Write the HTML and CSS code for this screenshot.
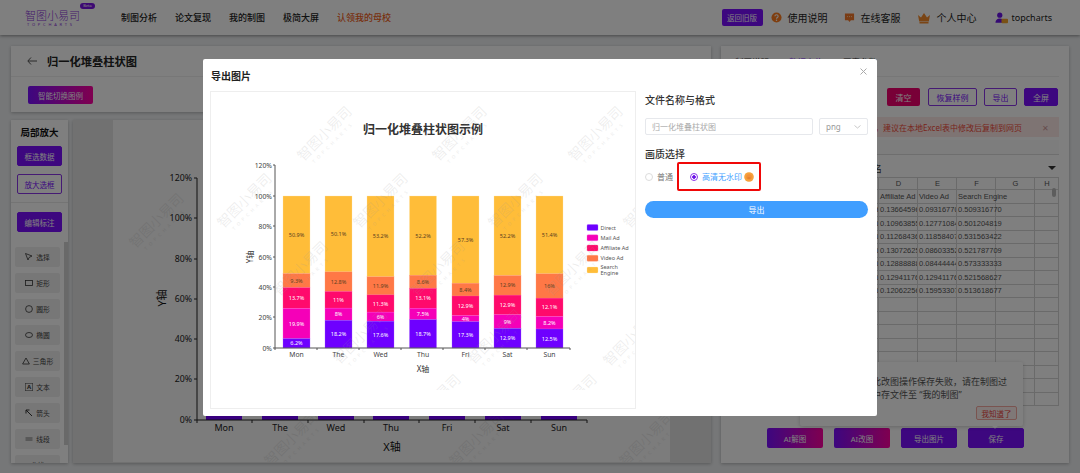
FILE: index.html
```html
<!DOCTYPE html>
<html lang="zh-CN">
<head>
  <meta charset="UTF-8">
  <title>归一化堆叠柱状图</title>
  <link rel="stylesheet" href="styles.css">
</head>
<body>
  <!-- Top bar -->
  <header class="topbar">
    <div class="logo">
      <div class="logo-name">智图小易司</div>
      <div class="logo-sub">TOPCHARTS</div>
      <span class="logo-beta">Beta</span>
    </div>
    <nav class="nav">
      <a>制图分析</a>
      <a>论文复现</a>
      <a>我的制图</a>
      <a>极简大屏</a>
      <a class="nav-hot">认领我的母校</a>
    </nav>
    <div class="top-right">
      <button class="old-btn">返回旧版</button>
      <a class="top-link">
        <svg width="11" height="11" viewBox="0 0 12 12"><circle cx="6" cy="6" r="5.5" fill="#ff7d1f"/><path d="M4.2 4.6C4.3 3.5 5 3 6 3s1.8.6 1.8 1.6C7.8 6 6 6 6 7.4" fill="none" stroke="#fff" stroke-width="1.2"/><circle cx="6" cy="9" r=".8" fill="#fff"/></svg>
        使用说明
      </a>
      <a class="top-link">
        <svg width="11" height="11" viewBox="0 0 12 12"><path d="M1 1.5h10v7.5H7.5L6 11 4.5 9H1z" fill="#f5792a"/><circle cx="3.8" cy="5" r=".6" fill="#ffd9b0"/><circle cx="6" cy="5" r=".6" fill="#ffd9b0"/><circle cx="8.2" cy="5" r=".6" fill="#ffd9b0"/></svg>
        在线客服
      </a>
      <a class="top-link">
        <svg width="14" height="12" viewBox="0 0 14 12"><path d="M1 3l3 2.500L7 1l3 4.500L13 3l-1.200 6.500H2.200z" fill="#f58a2a"/><rect x="2.500" y="10" width="9" height="1.500" fill="#f58a2a"/></svg>
        个人中心
      </a>
      <a class="top-link top-user">
        <svg width="13" height="12" viewBox="0 0 15 13"><circle cx="5.500" cy="3.200" r="3" fill="#6a12e8"/><path d="M.5 12c0-3 2-5 5-5s5 2 5 5z" fill="#6a12e8"/><rect x="7.500" y="7.500" width="7.500" height="5" rx="1" fill="#f2a32c"/></svg>
        topcharts
      </a>
    </div>
  </header>

  <main class="layout">
    <!-- Left side -->
    <section class="left-col">
      <div class="card title-card">
        <div class="title-row">
          <svg class="back" width="10" height="8" viewBox="0 0 10 8"><path d="M4 .5L.8 4 4 7.500M1 4h9" fill="none" stroke="#555" stroke-width="1"/></svg>
          <h1>归一化堆叠柱状图</h1>
        </div>
        <div class="title-tools">
          <button class="btn btn-grad switch-btn">智能切换图例</button>
        </div>
      </div>

      <div class="work">
        <aside class="tools card">
          <div class="tools-top">
            <div class="tools-title">局部放大</div>
            <button class="btn btn-solid tool-btn">框选数据</button>
            <button class="btn btn-line tool-btn">放大选框</button>
            <div class="tools-line"></div>
            <button class="btn btn-solid tool-btn">编辑标注</button>
          </div>
          <div class="shapes">
            <div class="shape">
              <svg width="8" height="8" viewBox="0 0 8 8"><path d="M.5.500L3 7l1-2.500L7 3z" fill="none" stroke="#333" stroke-width=".8"/></svg>选择
            </div>
            <div class="shape">
              <svg width="8" height="8" viewBox="0 0 8 8"><rect x=".5" y="1.500" width="7" height="5" fill="none" stroke="#333" stroke-width=".8"/></svg>矩形
            </div>
            <div class="shape">
              <svg width="8" height="8" viewBox="0 0 8 8"><circle cx="4" cy="4" r="3.400" fill="none" stroke="#333" stroke-width=".8"/></svg>圆形
            </div>
            <div class="shape">
              <svg width="8" height="8" viewBox="0 0 8 8"><ellipse cx="4" cy="4" rx="3.500" ry="2.500" fill="none" stroke="#333" stroke-width=".8"/></svg>椭圆
            </div>
            <div class="shape">
              <svg width="8" height="8" viewBox="0 0 8 8"><path d="M4 1l3.400 6H.6z" fill="none" stroke="#333" stroke-width=".8"/></svg>三角形
            </div>
            <div class="shape">
              <svg width="8" height="8" viewBox="0 0 8 8"><rect x=".3" y=".3" width="7.400" height="7.400" fill="none" stroke="#555" stroke-width=".6"/><text x="4" y="6.200" class="shape-a">A</text></svg>文本
            </div>
            <div class="shape">
              <svg width="8" height="8" viewBox="0 0 8 8"><path d="M1 1l6 6M1 1v3.500M1 1h3.500" fill="none" stroke="#333" stroke-width="1"/></svg>箭头
            </div>
            <div class="shape">
              <svg width="8" height="8" viewBox="0 0 8 8"><path d="M.5 3h7M.5 5h7" stroke="#555" stroke-width=".8"/></svg>线段
            </div>
            <div class="shape">曲线</div>
          </div>
        </aside>

        <div class="chart-card card">
          <svg class="bg-chart" width="557" height="342" viewBox="113 120 557 342">
            <defs>
              <g id="wm">
                <text class="wm-name" text-anchor="middle" x="0" y="0">智图小易司</text>
                <text class="wm-sub" text-anchor="middle" x="0" y="9">TOPCHARTS</text>
              </g>
            </defs>
            <g class="bg-bars">
              <rect x="206" y="400" width="36" height="20"/>
              <rect x="262" y="400" width="36" height="20"/>
              <rect x="318" y="400" width="36" height="20"/>
              <rect x="373" y="400" width="36" height="20"/>
              <rect x="429" y="400" width="36" height="20"/>
              <rect x="485" y="400" width="36" height="20"/>
              <rect x="541" y="400" width="36" height="20"/>
            </g>
            <path class="bg-axis" d="M194 178h3V420H587M194 218h3M194 259h3M194 299h3M194 339h3M194 379h3M194 420h3M197 420v3M252 420v3M308 420v3M364 420v3M419 420v3M475 420v3M531 420v3M587 420v3"/>
            <g class="bg-ylabels">
              <text x="192" y="181">120%</text>
              <text x="192" y="221">100%</text>
              <text x="192" y="262">80%</text>
              <text x="192" y="302">60%</text>
              <text x="192" y="342">40%</text>
              <text x="192" y="382">20%</text>
              <text x="192" y="423">0%</text>
            </g>
            <g class="bg-xlabels">
              <text x="224" y="431">Mon</text>
              <text x="280" y="431">The</text>
              <text x="336" y="431">Wed</text>
              <text x="391" y="431">Thu</text>
              <text x="447" y="431">Fri</text>
              <text x="503" y="431">Sat</text>
              <text x="559" y="431">Sun</text>
            </g>
            <text class="bg-name" x="392" y="451">X轴</text>
            <text class="bg-name" transform="translate(166 298) rotate(-90)">Y轴</text>
            <use href="#wm" transform="translate(160 224) rotate(-45)"/>
            <use href="#wm" transform="translate(295 442) rotate(-45)"/>
            <use href="#wm" transform="translate(480 442) rotate(-45)"/>
            <use href="#wm" transform="translate(650 442) rotate(-45)"/>
          </svg>
        </div>
      </div>
    </section>

    <!-- Right side -->
    <section class="right-col card">
      <div class="tabs">
        <a>制图说明</a>
        <a class="tab-on">数据上传</a>
        <a>图表参数</a>
      </div>
      <div class="data-tools">
        <button class="btn btn-red data-btn">清空</button>
        <button class="btn btn-line data-btn">恢复样例</button>
        <button class="btn btn-line data-btn">导出</button>
        <button class="btn btn-solid data-btn">全屏</button>
      </div>
      <div class="alert">
        <span>网页端数据不能保存，建议在本地Excel表中修改后复制到网页</span>
        <span class="alert-x">✕</span>
      </div>
      <div class="sheet-bar"></div>
      <div class="sheet-name">
        <span>选择工作表名</span>
        <i class="sheet-arrow"></i>
      </div>
      <div class="sheet">
        <table>
          <tr class="col-head"><th></th><th>A</th><th>B</th><th>C</th><th>D</th><th>E</th><th>F</th><th>G</th><th>H</th></tr>
          <tr><th>1</th><td></td><td>Direct</td><td>Mail Ad</td><td>Affiliate Ad</td><td>Video Ad</td><td>Search Engine</td><td></td><td></td></tr>
          <tr><th>2</th><td>Mon</td><td>0.062111801</td><td>0.198757764</td><td>0.136645963</td><td>0.093167702</td><td>0.509316770</td><td></td><td></td></tr>
          <tr><th>3</th><td>The</td><td>0.182000000</td><td>0.080000000</td><td>0.109638554</td><td>0.127710843</td><td>0.501204819</td><td></td><td></td></tr>
          <tr><th>4</th><td>Wed</td><td>0.176000000</td><td>0.060000000</td><td>0.112684366</td><td>0.118584071</td><td>0.531563422</td><td></td><td></td></tr>
          <tr><th>5</th><td>Thu</td><td>0.187000000</td><td>0.075000000</td><td>0.130726257</td><td>0.086033520</td><td>0.521787709</td><td></td><td></td></tr>
          <tr><th>6</th><td>Fri</td><td>0.173000000</td><td>0.040000000</td><td>0.128888889</td><td>0.084444444</td><td>0.573333333</td><td></td><td></td></tr>
          <tr><th>7</th><td>Sat</td><td>0.129000000</td><td>0.090000000</td><td>0.129411765</td><td>0.129411765</td><td>0.521568627</td><td></td><td></td></tr>
          <tr><th>8</th><td>Sun</td><td>0.125000000</td><td>0.082000000</td><td>0.120622568</td><td>0.159533074</td><td>0.513618677</td><td></td><td></td></tr>
          <tr><th>9</th><td></td><td></td><td></td><td></td><td></td><td></td><td></td><td></td></tr>
          <tr><th>10</th><td></td><td></td><td></td><td></td><td></td><td></td><td></td><td></td></tr>
          <tr><th>11</th><td></td><td></td><td></td><td></td><td></td><td></td><td></td><td></td></tr>
          <tr><th>12</th><td></td><td></td><td></td><td></td><td></td><td></td><td></td><td></td></tr>
          <tr><th>13</th><td></td><td></td><td></td><td></td><td></td><td></td><td></td><td></td></tr>
          <tr><th>14</th><td></td><td></td><td></td><td></td><td></td><td></td><td></td><td></td></tr>
          <tr><th>15</th><td></td><td></td><td></td><td></td><td></td><td></td><td></td><td></td></tr>
          <tr><th>16</th><td></td><td></td><td></td><td></td><td></td><td></td><td></td><td></td></tr>
        </table>
        <div class="sheet-thumb"></div>
      </div>
      <div class="actions">
        <button class="btn btn-grad act-btn">AI解图</button>
        <button class="btn btn-grad act-btn">AI改图</button>
        <button class="btn btn-solid act-btn">导出图片</button>
        <button class="btn btn-solid act-btn">保存</button>
      </div>
      <div class="notice">
        <p>若此改图操作保存失败，请在制图过<br>程中存文件至 “我的制图”</p>
        <button class="notice-btn">我知道了</button>
      </div>
    </section>
  </main>

  <div class="mask"></div>

  <!-- Export dialog -->
  <div class="dialog">
    <div class="dialog-head">
      <h2>导出图片</h2>
      <svg class="dialog-x" width="7" height="7" viewBox="0 0 7 7"><path d="M.5.500l6 6M6.500.500l-6 6" stroke="#aaa" stroke-width="1"/></svg>
    </div>
    <div class="dialog-body">
      <div class="preview">
        <svg width="424" height="316" viewBox="211 92 424 316">
          <defs>
            <clipPath id="wm-clip"><rect x="211" y="92" width="424" height="298"/></clipPath>
          </defs>
          <text class="c-title" x="423" y="134">归一化堆叠柱状图示例</text>

          <g class="c-yellow">
            <rect x="283" y="196" width="27" height="77.500"/>
            <rect x="325" y="196" width="27" height="75.900"/>
            <rect x="367" y="196" width="27" height="80.800"/>
            <rect x="409.500" y="196" width="27" height="79.200"/>
            <rect x="452" y="196" width="27" height="87.200"/>
            <rect x="494" y="196" width="27" height="79.500"/>
            <rect x="536" y="196" width="27" height="77.800"/>
          </g>
          <g class="c-orange">
            <rect x="283" y="273.500" width="27" height="14.100"/>
            <rect x="325" y="271.900" width="27" height="19.500"/>
            <rect x="367" y="276.800" width="27" height="18.100"/>
            <rect x="409.500" y="275.200" width="27" height="13.100"/>
            <rect x="452" y="283.200" width="27" height="12.800"/>
            <rect x="494" y="275.500" width="27" height="19.600"/>
            <rect x="536" y="273.800" width="27" height="24.300"/>
          </g>
          <g class="c-pink">
            <rect x="283" y="287.600" width="27" height="20.800"/>
            <rect x="325" y="291.400" width="27" height="16.700"/>
            <rect x="367" y="294.900" width="27" height="17.200"/>
            <rect x="409.500" y="288.300" width="27" height="19.900"/>
            <rect x="452" y="296" width="27" height="19.600"/>
            <rect x="494" y="295.100" width="27" height="19.600"/>
            <rect x="536" y="298.100" width="27" height="18.400"/>
          </g>
          <g class="c-magenta">
            <rect x="283" y="308.400" width="27" height="30.200"/>
            <rect x="325" y="308.100" width="27" height="12.200"/>
            <rect x="367" y="312.100" width="27" height="9.100"/>
            <rect x="409.500" y="308.200" width="27" height="11.400"/>
            <rect x="452" y="315.600" width="27" height="6.100"/>
            <rect x="494" y="314.700" width="27" height="13.700"/>
            <rect x="536" y="316.500" width="27" height="12.500"/>
          </g>
          <g class="c-purple">
            <rect x="283" y="338.600" width="27" height="9.400"/>
            <rect x="325" y="320.300" width="27" height="27.700"/>
            <rect x="367" y="321.200" width="27" height="26.800"/>
            <rect x="409.500" y="319.600" width="27" height="28.400"/>
            <rect x="452" y="321.700" width="27" height="26.300"/>
            <rect x="494" y="328.400" width="27" height="19.600"/>
            <rect x="536" y="329" width="27" height="19"/>
          </g>

          <g class="c-val c-val-dark">
            <text x="296.500" y="236.700">50.9%</text>
            <text x="338.500" y="235.900">50.1%</text>
            <text x="380.500" y="238.400">53.2%</text>
            <text x="423" y="237.600">52.2%</text>
            <text x="465.500" y="241.600">57.3%</text>
            <text x="507.500" y="237.700">52.2%</text>
            <text x="549.500" y="236.900">51.4%</text>
            <text x="296.500" y="282.500">9.3%</text>
            <text x="338.500" y="283.600">12.8%</text>
            <text x="380.500" y="287.800">11.9%</text>
            <text x="423" y="283.700">8.6%</text>
            <text x="465.500" y="291.600">8.4%</text>
            <text x="507.500" y="287.300">12.9%</text>
            <text x="549.500" y="288">16%</text>
          </g>
          <g class="c-val c-val-light">
            <text x="296.500" y="300">13.7%</text>
            <text x="338.500" y="301.700">11%</text>
            <text x="380.500" y="305.500">11.3%</text>
            <text x="423" y="300.200">13.1%</text>
            <text x="465.500" y="307.800">12.9%</text>
            <text x="507.500" y="306.900">12.9%</text>
            <text x="549.500" y="309.300">12.1%</text>
            <text x="296.500" y="325.500">19.9%</text>
            <text x="338.500" y="316.200">8%</text>
            <text x="380.500" y="318.600">6%</text>
            <text x="423" y="315.900">7.5%</text>
            <text x="465.500" y="320.600">4%</text>
            <text x="507.500" y="323.500">9%</text>
            <text x="549.500" y="324.700">8.2%</text>
            <text x="296.500" y="345.300">6.2%</text>
            <text x="338.500" y="336.100">18.2%</text>
            <text x="380.500" y="336.600">17.6%</text>
            <text x="423" y="335.800">18.7%</text>
            <text x="465.500" y="336.800">17.3%</text>
            <text x="507.500" y="340.200">12.9%</text>
            <text x="549.500" y="340.500">12.5%</text>
          </g>

          <path class="c-axis" d="M273 165h2V348H570M273 196h2M273 226h2M273 257h2M273 287h2M273 317h2M273 348h2M275 348v2M317 348v2M359 348v2M401 348v2M443 348v2M485 348v2M527 348v2M570 348v2"/>
          <g class="c-ylabels">
            <text x="272" y="167.500">120%</text>
            <text x="272" y="198.500">100%</text>
            <text x="272" y="228.500">80%</text>
            <text x="272" y="259.500">60%</text>
            <text x="272" y="289.500">40%</text>
            <text x="272" y="319.500">20%</text>
            <text x="272" y="350.500">0%</text>
          </g>
          <g class="c-xlabels">
            <text x="296.500" y="357">Mon</text>
            <text x="338.500" y="357">The</text>
            <text x="380.500" y="357">Wed</text>
            <text x="423" y="357">Thu</text>
            <text x="465.500" y="357">Fri</text>
            <text x="507.500" y="357">Sat</text>
            <text x="549.500" y="357">Sun</text>
          </g>
          <text class="c-name" x="423" y="372">X轴</text>
          <text class="c-name" transform="translate(253 257) rotate(-90)">Y轴</text>

          <rect class="c-purple" x="587" y="224.500" width="11" height="6" rx="1"/>
          <rect class="c-magenta" x="587" y="234.800" width="11" height="6" rx="1"/>
          <rect class="c-pink" x="587" y="245" width="11" height="6" rx="1"/>
          <rect class="c-orange" x="587" y="255.300" width="11" height="6" rx="1"/>
          <rect class="c-yellow" x="587" y="267" width="11" height="6" rx="1"/>
          <g class="c-legend">
            <text x="600.500" y="229.500">Direct</text>
            <text x="600.500" y="239.800">Mail Ad</text>
            <text x="600.500" y="250">Affiliate Ad</text>
            <text x="600.500" y="260.300">Video Ad</text>
            <text x="600.500" y="269">Search</text>
            <text x="600.500" y="274.500">Engine</text>
          </g>

          <g clip-path="url(#wm-clip)">
            <use href="#wm" transform="translate(328 137) rotate(-45)"/>
            <use href="#wm" transform="translate(463 137) rotate(-45)"/>
            <use href="#wm" transform="translate(599 137) rotate(-45)"/>
            <use href="#wm" transform="translate(248 204) rotate(-45)"/>
            <use href="#wm" transform="translate(384 204) rotate(-45)"/>
            <use href="#wm" transform="translate(519 204) rotate(-45)"/>
            <use href="#wm" transform="translate(654 204) rotate(-45)"/>
            <use href="#wm" transform="translate(304 272) rotate(-45)"/>
            <use href="#wm" transform="translate(441 272) rotate(-45)"/>
            <use href="#wm" transform="translate(576 272) rotate(-45)"/>
            <use href="#wm" transform="translate(364 340) rotate(-45)"/>
            <use href="#wm" transform="translate(498 340) rotate(-45)"/>
            <use href="#wm" transform="translate(634 342) rotate(-45)"/>
            <use href="#wm" transform="translate(437 405) rotate(-45)"/>
            <use href="#wm" transform="translate(573 405) rotate(-45)"/>
          </g>
        </svg>
      </div>

      <div class="options">
        <h3>文件名称与格式</h3>
        <div class="file-row">
          <div class="file-input">归一化堆叠柱状图</div>
          <div class="file-type">
            <span>png</span>
            <svg width="7" height="4" viewBox="0 0 7 4"><path d="M.5.500L3.500 3 6.500.500" fill="none" stroke="#bbb" stroke-width=".8"/></svg>
          </div>
        </div>
        <h3 class="quality-title">画质选择</h3>
        <div class="quality-row">
          <label class="radio"><i class="radio-dot"></i>普通</label>
          <label class="radio radio-on"><i class="radio-dot"></i>高清无水印</label>
          <svg class="coin" width="10" height="10" viewBox="0 0 10 10"><circle cx="5" cy="5" r="4.800" fill="#f7a13a"/><circle cx="5" cy="5" r="2.800" fill="#f0903a"/><path d="M3.500 6h3" stroke="#d8701f" stroke-width=".8"/></svg>
          <div class="red-box"></div>
        </div>
        <button class="export-btn">导出</button>
      </div>
    </div>
  </div>
</body>
</html>
```

FILE: styles.css
```css
* {
  box-sizing: border-box;
}
html, body {
  height: 473px;
  overflow: hidden;
}
body {
  margin: 0;
  background: #eceef0;
  color: #333;
  font-family: "Noto Sans", "Noto Sans CJK SC", sans-serif;
  font-size: 8px;
}
button {
  font-family: inherit;
  padding: 0;
  cursor: pointer;
}
h1, h2, h3, p {
  margin: 0;
}

/* top bar */
.topbar {
  display: flex;
  align-items: center;
  height: 35px;
  padding-left: 25px;
  background: #fff;
  box-shadow: 0 1px 3px rgba(0, 0, 0, .4);
  position: relative;
}
.logo {
  position: relative;
  width: 96px;
  margin-top: 1px;
}
.logo-name {
  color: #8a35d8;
  font-size: 11px;
  line-height: 13px;
  font-weight: 300;
}
.logo-sub {
  color: #8a35d8;
  font-size: 4px;
  line-height: 6px;
  letter-spacing: 2.800px;
  margin-left: 2px;
}
.logo-beta {
  position: absolute;
  left: 55px;
  top: -6px;
  width: 15px;
  height: 6px;
  border-radius: 3px;
  background: #7b12e6;
  color: #fff;
  font-size: 4px;
  line-height: 6px;
  text-align: center;
}
.nav {
  display: flex;
  gap: 18px;
  font-size: 9px;
  font-weight: 500;
  color: #222;
}
.nav-hot {
  color: #f0601a;
}
.top-right {
  display: flex;
  align-items: center;
  margin-left: auto;
  padding-right: 28px;
}
.old-btn {
  width: 41px;
  height: 17px;
  border: 0;
  border-radius: 2px;
  background: #7a0eff;
  color: #fff;
  font-size: 7.500px;
  margin-right: 8px;
}
.top-link {
  display: flex;
  align-items: center;
  gap: 6px;
  font-size: 10px;
  color: #222;
  margin-right: 16px;
}
.top-user {
  font-size: 9px;
  gap: 4px;
  margin: 0 0 0 2px;
}

/* page layout */
.layout {
  display: flex;
  gap: 10px;
  height: 438px;
  padding: 11px 11px 0;
}
.card {
  background: #fff;
  box-shadow: 0 1px 3px rgba(0, 0, 0, .25);
}
.left-col {
  width: 700px;
  display: flex;
  flex-direction: column;
  gap: 8px;
  height: 417px;
}
.title-card {
  height: 66px;
}
.title-row {
  display: flex;
  align-items: center;
  gap: 10px;
  height: 31px;
  padding-left: 16px;
  border-bottom: 1px solid #eee;
}
.title-row h1 {
  font-size: 11.250px;
  font-weight: 700;
  color: #222;
}
.title-tools {
  padding: 9px 17px;
}
.btn {
  border-radius: 2px;
  font-size: 7.500px;
}
.btn-solid {
  background: #7a0eff;
  border: 1px solid #7a0eff;
  color: #fff;
}
.btn-line {
  background: #fff;
  border: 1px solid #8a35e8;
  color: #7a0eff;
}
.btn-grad {
  background: linear-gradient(90deg, #7a0eff, #ff00a0);
  border: 0;
  color: #fff;
}
.btn-red {
  background: #f0006e;
  border: 0;
  color: #fff;
}
.switch-btn {
  width: 65px;
  height: 18px;
}
.work {
  display: flex;
  gap: 5px;
  height: 343px;
}

/* tool panel */
.tools {
  width: 57px;
  overflow: hidden;
}
.tools-top {
  height: 122px;
  padding: 6px 6px 0;
}
.tools-title {
  font-size: 9.500px;
  font-weight: 700;
  color: #111;
  text-align: center;
  line-height: 13px;
  margin-bottom: 7px;
}
.tool-btn {
  display: block;
  width: 45px;
  height: 20px;
  margin-bottom: 8px;
}
.tools-line {
  border-top: 1px solid #e8e8e8;
  margin: 0 -6px 9px;
}
.shapes {
  height: 203px;
  width: 57px;
  padding: 5px 0 0 4px;
  border-right: 4px solid #d2d2d2;
  display: flex;
  flex-direction: column;
  gap: 6px;
}
.shape {
  display: flex;
  align-items: center;
  justify-content: center;
  gap: 3px;
  flex: none;
  width: 45px;
  height: 20px;
  background: #efefef;
  border-radius: 2px;
  font-size: 6.800px;
  color: #444;
}
.shape-a {
  font-size: 6px;
  font-weight: 700;
  text-anchor: middle;
  fill: #333;
}

/* chart in the background */
.chart-card {
  flex: 1;
  background: #e2e2e2;
  display: flex;
  padding-left: 40px;
}
.bg-chart {
  background: #f8f8f8;
  display: block;
}
.bg-bars rect {
  fill: #7000ff;
}
.bg-axis {
  fill: none;
  stroke: #222;
  stroke-width: 1;
}
.bg-ylabels text {
  font-size: 8.800px;
  text-anchor: end;
  fill: #222;
}
.bg-xlabels text {
  font-size: 9px;
  text-anchor: middle;
  fill: #222;
}
.bg-name {
  font-size: 11px;
  text-anchor: middle;
  fill: #111;
}
.wm-name {
  font-size: 14px;
  fill: #999;
  opacity: .2;
  font-weight: 300;
}
.wm-sub {
  font-size: 4.500px;
  letter-spacing: 3.500px;
  fill: #999;
  opacity: .2;
}

/* right card */
.right-col {
  position: relative;
  flex: 1;
  height: 417px;
  padding: 0 10px;
  display: flex;
  flex-direction: column;
}
.tabs {
  display: flex;
  gap: 20px;
  height: 31px;
  padding: 10px 0 0 4px;
  font-size: 8.500px;
  line-height: 12px;
  border-bottom: 1px solid #eee;
}
.tab-on {
  color: #7a0eff;
}
.data-tools {
  display: flex;
  justify-content: flex-end;
  gap: 7px;
  margin-top: 11px;
  padding-right: 1px;
}
.data-btn {
  width: 34px;
  height: 18px;
  font-size: 8px;
}
.data-btn:nth-child(1) {
  width: 33px;
  margin-right: 1px;
}
.data-btn:nth-child(2) {
  width: 49px;
}
.data-btn:nth-child(3) {
  width: 33px;
}
.alert {
  display: flex;
  justify-content: flex-end;
  align-items: center;
  height: 20px;
  margin: 11px 0 0 -2px;
  padding-right: 10px;
  background: #fde8e6;
  color: #f04a3a;
  font-size: 8px;
  white-space: nowrap;
}
.alert-x {
  margin-left: 20px;
  font-size: 8px;
  color: #c99;
}
.sheet-bar {
  height: 15px;
  margin-top: 3px;
  background: #fafafa;
  border-bottom: 1px solid #ddd;
}
.sheet-name {
  display: flex;
  align-items: center;
  justify-content: space-between;
  height: 22px;
  padding: 4px 3px 0 97px;
  font-size: 9px;
  color: #333;
}
.sheet-arrow {
  width: 0;
  height: 0;
  border-left: 4px solid transparent;
  border-right: 4px solid transparent;
  border-top: 4px solid #333;
}
.sheet {
  position: relative;
  height: 235px;
  overflow: hidden;
}
.sheet table {
  width: 327px;
  border-collapse: collapse;
  table-layout: fixed;
  font-family: "Liberation Sans", sans-serif;
  font-size: 7.500px;
  color: #555;
}
.sheet tr {
  height: 13.500px;
}
.sheet th, .sheet td {
  padding: 0 0 0 1px;
  border: 1px solid #d4d4d4;
  white-space: nowrap;
  overflow: hidden;
  font-weight: 400;
  text-align: left;
}
/* the last filled column runs over the empty one beside it */
.sheet td:nth-child(7) {
  overflow: visible;
}
.sheet th:first-child {
  width: 30px;
}
.sheet .col-head {
  height: 12px;
}
.col-head th {
  width: 39px;
  text-align: center;
}
.col-head th:last-child {
  width: 24px;
}
.sheet-thumb {
  position: absolute;
  left: 321px;
  top: 11px;
  width: 4px;
  height: 9px;
  border-radius: 2px;
  background: #bbb;
}
.actions {
  display: flex;
  justify-content: flex-end;
  gap: 11px;
  margin-top: 16px;
  padding-right: 35px;
}
.act-btn {
  width: 56px;
  height: 20px;
  font-size: 7.500px;
}
.notice {
  position: absolute;
  left: 79px;
  top: 316px;
  width: 223px;
  height: 64px;
  padding: 13px 0 0 63px;
  background: #fff;
  border-radius: 2px;
  box-shadow: 0 1px 4px rgba(0, 0, 0, .2);
  font-size: 9px;
  line-height: 13px;
  color: #555;
}
.notice::after {
  content: "";
  position: absolute;
  left: 193px;
  bottom: -2px;
  width: 4px;
  height: 4px;
  background: #fff;
  transform: rotate(45deg);
}
.notice-btn {
  position: absolute;
  right: 6px;
  bottom: 6px;
  width: 41px;
  height: 14px;
  border: 1px solid #f4a8a0;
  border-radius: 2px;
  background: #fff1ef;
  color: #e8403a;
  font-size: 7.500px;
}

/* dialog */
.mask {
  position: fixed;
  inset: 0;
  background: rgba(0, 0, 0, .5);
}
.dialog {
  position: fixed;
  left: 203px;
  top: 59px;
  width: 674px;
  height: 357px;
  padding: 0 9px 8px 8px;
  background: #fff;
  border-radius: 2px;
}
.dialog-head {
  height: 33px;
  display: flex;
  align-items: center;
  justify-content: space-between;
}
.dialog-head h2 {
  font-size: 10px;
  font-weight: 700;
  color: #222;
}
.dialog-x {
  margin: -9px 1px 0 0;
}
.dialog-body {
  display: flex;
  gap: 10px;
}
.preview {
  width: 424px;
  height: 316px;
  outline: 1px solid #eee;
}
.preview svg {
  display: block;
}
.c-title {
  font-size: 12px;
  font-weight: 700;
  text-anchor: middle;
  fill: #333;
}
.c-yellow rect, rect.c-yellow {
  fill: #ffbd39;
  stroke: #ffe3a8;
  stroke-width: .3;
}
.c-orange rect, rect.c-orange {
  fill: #ff7846;
  stroke: #ff9a74;
  stroke-width: .3;
}
.c-pink rect, rect.c-pink {
  fill: #ff0a6c;
  stroke: #ff5a9c;
  stroke-width: .3;
}
.c-magenta rect, rect.c-magenta {
  fill: #f500b8;
  stroke: #ff60d8;
  stroke-width: .3;
}
.c-purple rect, rect.c-purple {
  fill: #6e00ff;
  stroke: #a060ff;
  stroke-width: .3;
}
.c-val text {
  font-size: 5.500px;
  text-anchor: middle;
}
.c-val-dark text {
  fill: #5a4020;
}
.c-val-light text {
  fill: #fff;
}
.c-axis {
  fill: none;
  stroke: #555;
  stroke-width: 1;
}
.c-ylabels text {
  font-size: 6.800px;
  text-anchor: end;
  fill: #444;
}
.c-xlabels text {
  font-size: 6.800px;
  text-anchor: middle;
  fill: #444;
}
.c-name {
  font-size: 8px;
  text-anchor: middle;
  fill: #333;
}
.c-legend text {
  font-size: 5.500px;
  fill: #555;
}
.options {
  flex: 1;
}
.options h3 {
  font-size: 10px;
  font-weight: 500;
  line-height: 14px;
  color: #333;
}
.options > h3:first-child {
  margin-top: 1px;
}
.file-row {
  display: flex;
  gap: 6px;
  margin-top: 11px;
}
.file-input {
  width: 168px;
  height: 17px;
  padding-left: 6px;
  border: 1px solid #e6e8ec;
  border-radius: 2px;
  font-size: 8px;
  line-height: 15px;
  color: #aaa;
}
.file-type {
  flex: 1;
  display: flex;
  align-items: center;
  justify-content: space-between;
  height: 17px;
  padding: 0 6px;
  border: 1px solid #e6e8ec;
  border-radius: 2px;
  font-size: 8px;
  color: #999;
}
.quality-title {
  margin-top: 12px;
}
.quality-row {
  position: relative;
  display: flex;
  align-items: center;
  height: 29px;
  margin-top: 1px;
}
.radio {
  display: flex;
  align-items: center;
  gap: 4px;
  font-size: 8px;
  color: #777;
  margin-right: 17px;
}
.radio-dot {
  width: 8px;
  height: 8px;
  border: 1px solid #ddd;
  border-radius: 50%;
  background: #fff;
}
.radio-on {
  color: #409eff;
  margin-right: 2px;
}
.radio-on .radio-dot {
  border-color: #8a35e8;
  background: radial-gradient(circle, #6a12e8 0 1.500px, #fff 2px);
}
.red-box {
  position: absolute;
  left: 32px;
  top: 0;
  width: 84px;
  height: 29px;
  border: 2px solid #f00808;
  border-radius: 2px;
}
.export-btn {
  display: block;
  width: 100%;
  height: 17px;
  margin-top: 10px;
  border: 0;
  border-radius: 9px;
  background: #409eff;
  color: #fff;
  font-size: 8px;
}
```
